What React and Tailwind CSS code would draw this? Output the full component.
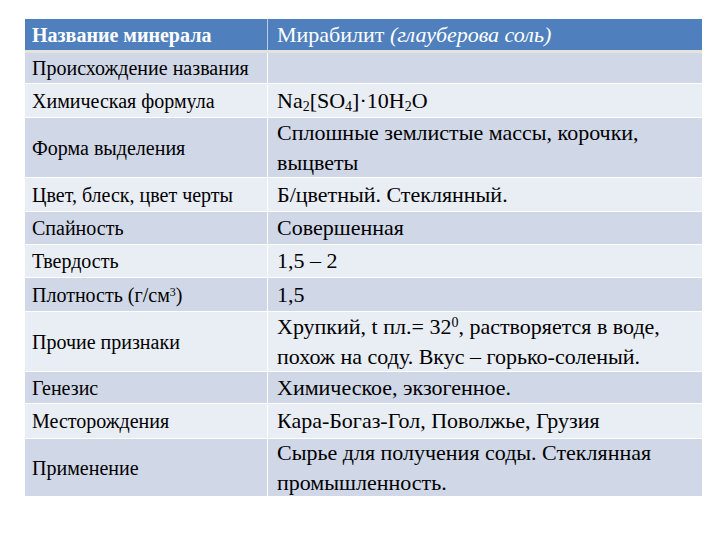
import React from "react";

const rows = [
  { h: "h-[31px]", left: "Происхождение названия", right: null, dark: true },
  {
    h: "h-[34px]",
    left: "Химическая формула",
    right: (
      <span>
        Na<sub className="text-[14px]">2</sub>[SO<sub className="text-[14px]">4</sub>]·10H<sub className="text-[14px]">2</sub>O
      </span>
    ),
    dark: false,
  },
  {
    h: "h-[60px]",
    left: "Форма выделения",
    right: (
      <span>
        Сплошные землистые массы, корочки,
        <br />
        выцветы
      </span>
    ),
    dark: true,
  },
  { h: "h-[34px]", left: "Цвет, блеск, цвет черты", right: "Б/цветный. Стеклянный.", dark: false },
  { h: "h-[33px]", left: "Спайность", right: "Совершенная", dark: true },
  { h: "h-[33px]", left: "Твердость", right: "1,5 – 2", dark: false },
  {
    h: "h-[34px]",
    left: (
      <span>
        Плотность (г/см<sup className="text-[12px]">3</sup>)
      </span>
    ),
    right: "1,5",
    dark: true,
  },
  {
    h: "h-[60px]",
    left: "Прочие признаки",
    right: (
      <span>
        Хрупкий, t пл.= 32<sup className="text-[14px]">0</sup>, растворяется в воде,
        <br />
        похож на соду. Вкус – горько-соленый.
      </span>
    ),
    dark: false,
  },
  { h: "h-[32px]", left: "Генезис", right: "Химическое, экзогенное.", dark: true },
  { h: "h-[35px]", left: "Месторождения", right: "Кара-Богаз-Гол, Поволжье, Грузия", dark: false },
  {
    h: "h-[58px]",
    left: "Применение",
    right: (
      <span>
        Сырье для получения соды. Стеклянная
        <br />
        промышленность.
      </span>
    ),
    dark: true,
  },
];

export default function App() {
  return (
    <div className="w-[720px] h-[540px] bg-white pt-[19px] pl-[25px] font-['Liberation_Serif','DejaVu_Serif',serif]">
      <div className="w-[677px] flex flex-col text-black">
        <div className="flex h-[34px] bg-[#4f7fbd] text-white border-b-[3px] border-[#e4e2dc]">
          <div className="w-[243px] flex items-center pl-[7px] text-[20px] font-bold border-r border-white/60 whitespace-nowrap">
            Название минерала
          </div>
          <div className="flex-1 flex items-center pl-[9px] text-[22px] whitespace-nowrap">
            <span>
              Мирабилит <i>(глауберова соль)</i>
            </span>
          </div>
        </div>
        {rows.map((r, i) => (
          <div
            key={i}
            className={`flex ${r.h} border-b border-white ${r.dark ? "bg-[#d0d8e8]" : "bg-[#e9edf4]"}`}
          >
            <div className="w-[243px] flex items-center pl-[7px] text-[20px] leading-[22px] border-r border-white whitespace-nowrap">
              {r.left}
            </div>
            <div className="flex-1 flex items-center pl-[9px] pr-[4px] text-[22px] leading-[30px] whitespace-nowrap">
              {r.right}
            </div>
          </div>
        ))}
      </div>
    </div>
  );
}
